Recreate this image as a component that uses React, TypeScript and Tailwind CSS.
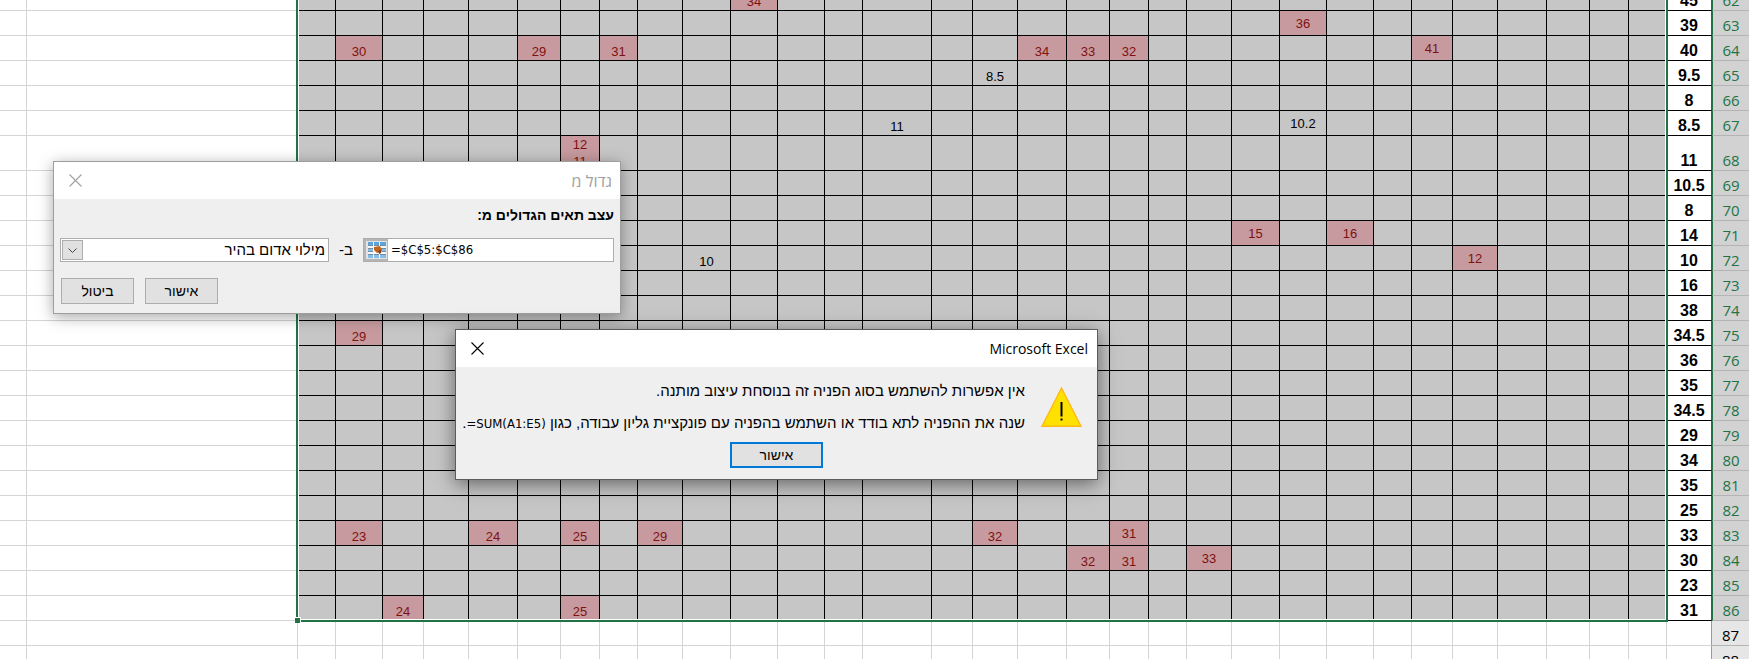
import React from 'react';

interface CellData {
  value: string;
  red?: boolean;
  middle?: boolean;
}

// D..AH, as they run from right to left on the sheet
const COLUMNS: [string, number][] = [
  ['D', 38], ['E', 39], ['F', 43], ['G', 49], ['H', 45], ['I', 41], ['J', 38], ['K', 47],
  ['L', 47], ['M', 48], ['N', 45], ['O', 38], ['P', 39], ['Q', 43], ['R', 49], ['S', 45],
  ['T', 41], ['U', 69], ['V', 38], ['W', 47], ['X', 47], ['Y', 48], ['Z', 45], ['AA', 38],
  ['AB', 39], ['AC', 43], ['AD', 49], ['AE', 45], ['AF', 41], ['AG', 47], ['AH', 38],
];

const FIRST_ROW = 62;
const COLUMN_C = [
  '45', '39', '40', '9.5', '8', '8.5', '11', '10.5', '8', '14', '10', '16', '38',
  '34.5', '36', '35', '34.5', '29', '34', '35', '25', '33', '30', '23', '31',
];

const CELLS: Record<string, CellData> = {
  X62: { value: '34', red: true },
  L63: { value: '36', red: true, middle: true },
  AG64: { value: '30', red: true },
  AC64: { value: '29', red: true },
  AA64: { value: '31', red: true },
  R64: { value: '34', red: true },
  Q64: { value: '33', red: true },
  P64: { value: '32', red: true },
  I64: { value: '41', red: true, middle: true },
  S65: { value: '8.5' },
  U67: { value: '11' },
  L67: { value: '10.2', middle: true },
  AB68: { value: '12\n11', red: true, middle: true },
  M71: { value: '15', red: true, middle: true },
  K71: { value: '16', red: true, middle: true },
  H72: { value: '12', red: true, middle: true },
  Y72: { value: '10' },
  AG75: { value: '29', red: true },
  AG83: { value: '23', red: true },
  AD83: { value: '24', red: true },
  AB83: { value: '25', red: true },
  Z83: { value: '29', red: true },
  S83: { value: '32', red: true },
  P83: { value: '31', red: true, middle: true },
  Q84: { value: '32', red: true },
  P84: { value: '31', red: true },
  N84: { value: '33', red: true, middle: true },
  AF86: { value: '24', red: true },
  AB86: { value: '25', red: true },
};

const SheetRow: React.FC<{ row: number }> = ({ row }) => (
  <tr className={row === 68 ? 'h-[35px]' : 'h-[25px]'}>
    <th
      scope="row"
      className="border-b border-l border-b-[#b4b4b4] border-l-[#217346] bg-[#d2d2d2] p-0 align-bottom font-['Open_Sans',sans-serif] text-[15px] leading-5 font-normal text-[#217346]"
    >
      {row}
    </th>
    <td className="border-r border-b border-r-[#217346] border-b-black bg-white p-0 text-center align-bottom text-base leading-[18px] font-bold">
      {COLUMN_C[row - FIRST_ROW]}
    </td>
    {COLUMNS.map(([name]) => {
      const cell = CELLS[name + row];
      return (
        <td
          key={name}
          className={`border-r border-b border-black p-0 text-center text-[13px] leading-[17px] whitespace-pre ${
            cell?.middle ? 'align-middle' : 'align-bottom'
          } ${cell?.red ? 'bg-[#c69a9e] text-[#7f1010]' : 'bg-[#c6c6c6]'}`}
        >
          {cell?.value}
        </td>
      );
    })}
    <td className="border-r border-b border-[#d4d4d4] p-0" />
    <td className="border-r border-b border-[#d4d4d4] p-0" />
  </tr>
);

const EmptyRow: React.FC<{ row: number }> = ({ row }) => (
  <tr className="h-[25px]">
    <th
      scope="row"
      className="border-b border-b-[#b4b4b4] bg-[#e6e6e6] p-0 align-bottom font-['Open_Sans',sans-serif] text-[15px] leading-5 font-normal text-black"
    >
      {row}
    </th>
    <td className="border-r border-b border-r-[#9b9b9b] border-b-[#d4d4d4] p-0" />
    {COLUMNS.map(([name]) => (
      <td key={name} className="border-r border-b border-[#d4d4d4] p-0" />
    ))}
    <td className="border-r border-b border-[#d4d4d4] p-0" />
    <td className="border-r border-b border-[#d4d4d4] p-0" />
  </tr>
);

const Sheet: React.FC = () => (
  <div className="relative -mt-[14px]">
    <table className="w-full table-fixed border-separate border-spacing-0 text-black">
      <colgroup>
        <col className="w-[37px]" />
        <col className="w-[45px]" />
        {COLUMNS.map(([name, width]) => (
          <col key={name} style={{ width }} />
        ))}
        <col />
        <col className="w-[27px]" />
      </colgroup>
      <tbody>
        {COLUMN_C.map((_, i) => (
          <SheetRow key={i} row={FIRST_ROW + i} />
        ))}
        <EmptyRow row={87} />
        <EmptyRow row={88} />
      </tbody>
    </table>
    {/* selection frame and fill handle */}
    <div className="pointer-events-none absolute -top-1 right-[81px] bottom-[49px] w-[1372px] border-2 border-[#217346]">
      <div className="h-full border border-white" />
      <div className="absolute -bottom-[3px] -left-[3px] h-[6px] w-[6px] border-t border-r border-white bg-[#217346]" />
    </div>
  </div>
);

const CloseIcon: React.FC = () => (
  <svg className="h-[13px] w-[13px]" viewBox="0 0 13 13" fill="none" stroke="currentColor">
    <path d="M0.5 0.5l12 12M12.5 0.5l-12 12" strokeWidth={1.1} />
  </svg>
);

const RangeIcon: React.FC = () => (
  <svg className="h-4 w-[18px] shrink-0" viewBox="0 0 18 16">
    <rect width="18" height="16" fill="#f4f8fb" />
    <path d="M0 0h5v3H0zM6 0h5v3H6zM12 0h6v3h-6z" fill="#5aa5dc" />
    <path d="M0 7h5v2H0zM0 13h5v3H0zM6 13h5v3H6zM12 13h6v3h-6zM13 7h5v2h-5z" fill="#86bde6" />
    <path d="M0 3.5h18M0 6.5h6M13 6.5h5M0 9.5h6M14 9.5h4M0 12.5h18" stroke="#56708c" strokeWidth={0.8} />
    <path d="M5.5 0v16M11.5 0v4M11.5 12v4" stroke="#fff" strokeWidth={0.8} />
    <path d="M6 5l6-1 2 4-1 3-2-1-2 1-3-3z" fill="#c0651e" />
    <path d="M10 9l3-1v3l-2 1z" fill="#8a3b12" />
  </svg>
);

const WarningIcon: React.FC = () => (
  <svg className="h-10 w-[41px] shrink-0" viewBox="0 0 41 40">
    <path d="M20.5 1L40 39.3H1z" fill="#ffe100" stroke="#ffb914" strokeWidth={1.4} />
    <path d="M19.5 15h2v14.5h-2zM19.5 31.5h2v2h-2z" fill="#000" />
  </svg>
);

const GreaterThanDialog: React.FC = () => (
  <section
    aria-label="גדול מ"
    className="absolute top-[161px] left-[53px] w-[568px] border border-[#9e9e9e] bg-[#efefef] shadow-[0_3px_14px_rgba(0,0,0,0.35)]"
  >
    <header className="flex h-[37px] items-center justify-between bg-white pr-2 pl-[15px] text-[#a0a0a0]">
      <h2 className="font-['Open_Sans','Liberation_Sans',sans-serif] text-base leading-5">גדול מ</h2>
      <button type="button" aria-label="סגור">
        <CloseIcon />
      </button>
    </header>
    <div className="flex flex-col px-[6px] pt-1.5 pb-[9px]">
      <label htmlFor="range" className="text-sm leading-5 font-bold">
        עצב תאים הגדולים מ:
      </label>
      <div className="mt-[13px] flex items-center">
        <div dir="ltr" className="flex h-6 w-[251px] border border-[#adadad] bg-white">
          <button type="button" aria-label="בחר טווח" className="flex w-6 items-center justify-center border-2 border-r border-[#b5b5b5] bg-[#e3e3e3]">
            <RangeIcon />
          </button>
          <input
            id="range"
            defaultValue="=$C$5:$C$86"
            className="min-w-0 flex-1 px-[3px] font-['DejaVu_Sans_Condensed',sans-serif] text-[13px] outline-none"
          />
        </div>
        <label htmlFor="format" className="flex-1 text-center">
          ב-
        </label>
        <div className="relative h-6 w-[269px]">
          <select id="format" className="h-full w-full appearance-none border border-[#adadad] bg-white px-[3px] leading-5 outline-none">
            <option>מילוי אדום בהיר</option>
          </select>
          <span className="pointer-events-none absolute top-0.5 left-0.5 flex h-5 w-[21px] items-center justify-center border border-[#adadad] bg-[#e1e1e1]">
            <svg className="h-[5px] w-[9px]" viewBox="0 0 9 5" fill="none" stroke="#444">
              <path d="M0.5 0.5l4 4 4-4" />
            </svg>
          </span>
        </div>
      </div>
      <div className="mt-4 flex justify-end gap-[11px] pl-px">
        <button type="button" className="h-[26px] w-[73px] border border-[#adadad] bg-[#e1e1e1] text-sm">
          אישור
        </button>
        <button type="button" className="h-[26px] w-[73px] border border-[#adadad] bg-[#e1e1e1] text-sm">
          ביטול
        </button>
      </div>
    </div>
  </section>
);

const AlertDialog: React.FC = () => (
  <section
    role="alertdialog"
    aria-label="Microsoft Excel"
    className="absolute top-[329px] left-[455px] w-[643px] border border-[#5c5c5c] bg-[#efefef] shadow-[0_4px_18px_rgba(0,0,0,0.5)]"
  >
    <header className="flex h-[37px] items-center justify-between bg-white pr-[9px] pl-[15px]">
      <h2 className="font-['Open_Sans',sans-serif] text-sm leading-5">Microsoft Excel</h2>
      <button type="button" aria-label="סגור">
        <CloseIcon />
      </button>
    </header>
    <div className="flex items-center gap-4 pt-3.5 pr-[15px]">
      <WarningIcon />
      <div className="flex flex-col gap-3 leading-5 whitespace-nowrap">
        <p className="h-5">אין אפשרות להשתמש בסוג הפניה זה בנוסחת עיצוב מותנה.</p>
        <p className="h-5">
          שנה את ההפניה לתא בודד או השתמש בהפניה עם פונקציית גליון עבודה, כגון{' '}
          <bdi dir="ltr" className="font-['DejaVu_Sans_Condensed',sans-serif] text-[13px]">=SUM(A1:E5)</bdi>.
        </p>
      </div>
    </div>
    <div className="flex justify-center pt-[9px] pb-[11px]">
      <button type="button" className="h-[26px] w-[93px] border-2 border-[#0078d7] bg-[#e1e1e1] text-sm">
        אישור
      </button>
    </div>
  </section>
);

const App: React.FC = () => (
  <div dir="rtl" className="relative h-screen overflow-hidden bg-white font-['Liberation_Sans',Arial,sans-serif] text-black">
    <Sheet />
    <div className="text-[15px]">
      <GreaterThanDialog />
      <AlertDialog />
    </div>
  </div>
);

export default App;
